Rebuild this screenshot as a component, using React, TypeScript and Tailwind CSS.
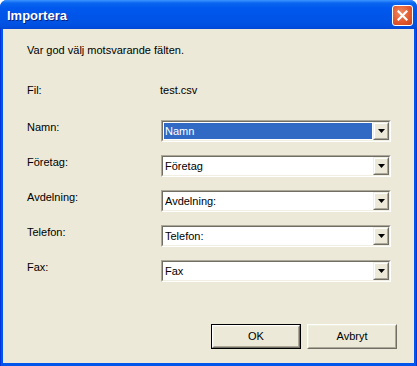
import React from "react";

const fields = [
  { label: "Namn:", value: "Namn", selected: true },
  { label: "Företag:", value: "Företag" },
  { label: "Avdelning:", value: "Avdelning:" },
  { label: "Telefon:", value: "Telefon:" },
  { label: "Fax:", value: "Fax" },
];

function Combo({ value, selected }: { value: string; selected?: boolean }) {
  return (
    <div className="w-[230px] h-[22px] border border-t-[#aca899] border-l-[#aca899] border-b-white border-r-white">
      <div className="h-full flex border border-t-[#716f64] border-l-[#716f64] border-b-[#f1efe2] border-r-[#f1efe2] bg-white">
        <div className="flex-1 p-px">
          <div
            className={
              selected
                ? "h-full flex items-center pl-[1px] bg-[#316ac5] text-white"
                : "h-full flex items-center pl-[1px] text-black"
            }
          >
            {value}
          </div>
        </div>
        {/* arrow button */}
        <div className="w-[16px] h-full border border-t-[#f1efe2] border-l-[#f1efe2] border-b-[#716f64] border-r-[#716f64]">
          <div className="h-full flex items-center justify-center bg-[#ece9d8] border border-t-white border-l-white border-b-[#aca899] border-r-[#aca899]">
            <svg width="7" height="4" viewBox="0 0 7 4">
              <path d="M0 0h7L3.5 4z" fill="#000" />
            </svg>
          </div>
        </div>
      </div>
    </div>
  );
}

function Button({ children, isDefault }: { children: React.ReactNode; isDefault?: boolean }) {
  return (
    <div className={isDefault ? "w-[90px] h-[25px] border border-black" : "w-[90px] h-[25px]"}>
      <div className="h-full border border-t-white border-l-white border-b-[#716f64] border-r-[#716f64]">
        <div className="h-full flex items-center justify-center border border-t-[#f1efe2] border-l-[#f1efe2] border-b-[#aca899] border-r-[#aca899] bg-[#ece9d8]">
          {children}
        </div>
      </div>
    </div>
  );
}

export default function App() {
  return (
    <div
      className="w-[417px] h-[366px] flex flex-col rounded-t-[7px] overflow-hidden bg-[linear-gradient(to_right,#0019cf,#0055ea_1px,#0055ea_calc(100%-1px),#0019cf)]"
      style={{ fontFamily: '"Liberation Sans", Arial, sans-serif' }}
    >
      {/* Title bar */}
      <div className="h-[29px] shrink-0 flex items-center justify-between pl-[7px] pr-[4px] bg-[linear-gradient(to_bottom,#3d95ff_0px,#0a66f0_3px,#0058ee_8px,#0054e6_20px,#0050e0_26px,#0046d4_29px)]">
        <span className="text-white font-bold text-[13px] leading-none mt-[2px] [text-shadow:1px_1px_0_#0a1f7a]">
          Importera
        </span>
        <div className="w-[21px] h-[21px] mt-[2px] rounded-[3px] border border-white flex items-center justify-center bg-[radial-gradient(circle_at_40%_35%,#f08a62,#e0562c_60%,#c8401c)]">
          <svg width="11" height="11" viewBox="0 0 11 11">
            <path d="M1.5 1.5l8 8M9.5 1.5l-8 8" stroke="#fff" strokeWidth="2.2" strokeLinecap="square" />
          </svg>
        </div>
      </div>

      {/* Client area */}
      <div className="flex-1 mx-[3px] mb-[3px] bg-[#ece9d8] text-[11px] leading-[13px] text-black flex flex-col pl-[24px]">
        <p className="mt-[15px]">Var god välj motsvarande fälten.</p>

        <div className="mt-[27px] flex">
          <span className="w-[133px]">Fil:</span>
          <span>test.csv</span>
        </div>

        <div className="mt-[23px] flex flex-col gap-[13px]">
          {fields.map((f) => (
            <div key={f.label} className="flex">
              <span className="w-[134px] mt-px">{f.label}</span>
              <Combo value={f.value} selected={f.selected} />
            </div>
          ))}
        </div>

        <div className="mt-auto mb-[14px] flex justify-end gap-[6px] pr-[17px]">
          <Button isDefault>OK</Button>
          <Button>Avbryt</Button>
        </div>
      </div>
    </div>
  );
}
